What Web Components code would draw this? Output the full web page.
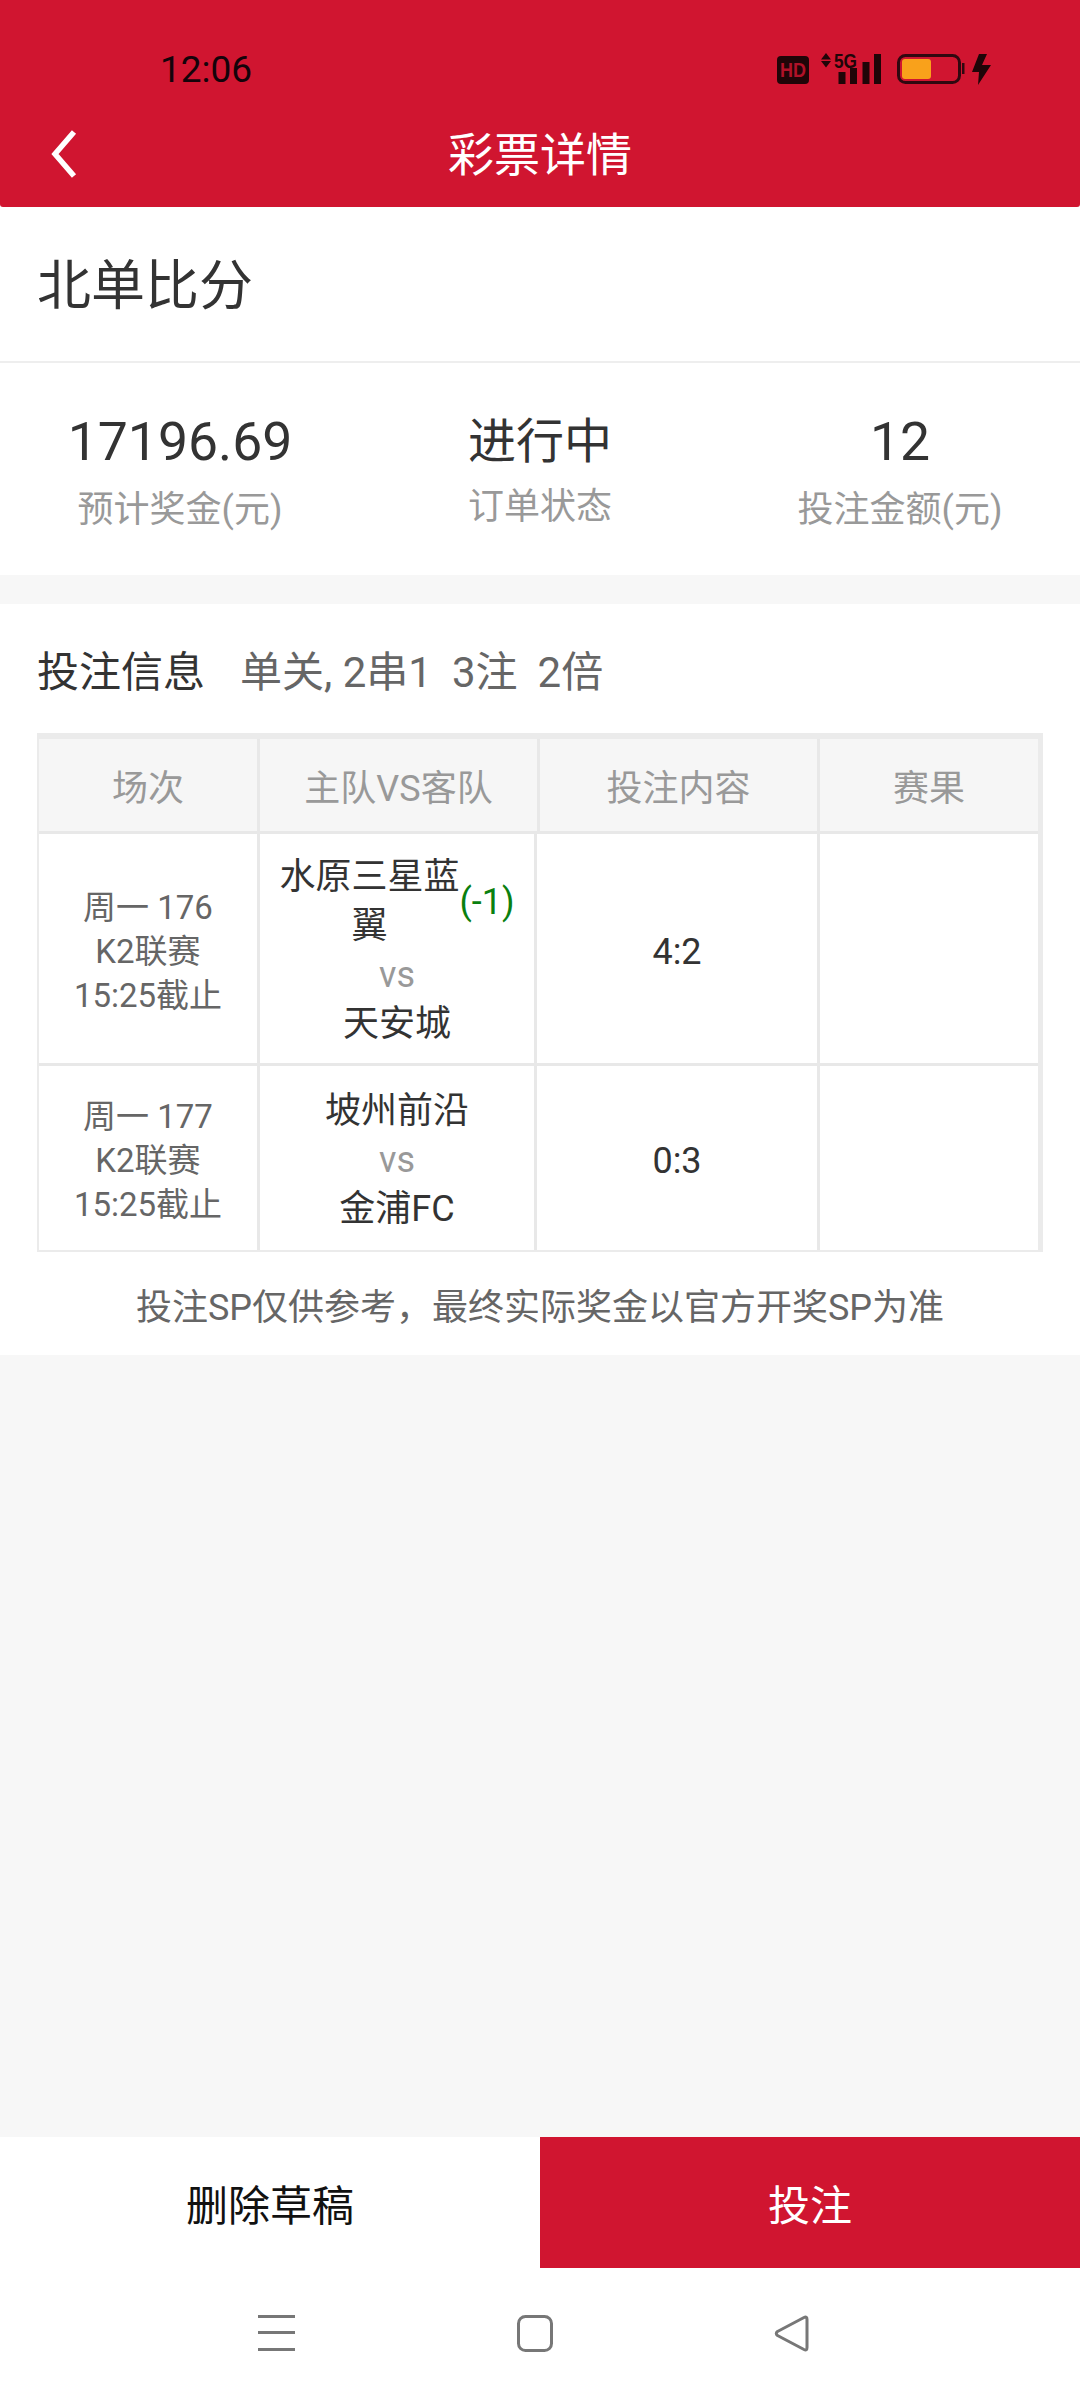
<!DOCTYPE html>
<html lang="zh"><head><meta charset="utf-8"><title>彩票详情</title>
<style>
html,body{margin:0;padding:0;background:#f7f7f7}
body{font-family:Roboto,"Noto Sans CJK SC",sans-serif;width:1080px;height:2400px;overflow:hidden}
lottery-page{height:2400px}
</style></head><body>
<lottery-page>
  <app-header title="彩票详情"></app-header>
  <title-row>北单比分</title-row>
  <stat-row>
    <stat-item value="17196.69" label="预计奖金(元)"></stat-item>
    <stat-item value="进行中" label="订单状态"></stat-item>
    <stat-item value="12" label="投注金额(元)"></stat-item>
  </stat-row>
  <bet-info>
    <bet-table>
      <bet-row pad="19px 0 14px" cell1="周一 176" cell2="K2联赛" cell3="15:25截止" score="4:2">
        <span slot="home">水原三星蓝翼</span><span slot="handicap">(-1)</span><span slot="away">天安城</span>
      </bet-row>
      <bet-row pad="21px 0 16px" cell1="周一 177" cell2="K2联赛" cell3="15:25截止" score="0:3">
        <span slot="home">坡州前沿</span><span slot="away">金浦FC</span>
      </bet-row>
    </bet-table>
  </bet-info>
  <action-bar></action-bar>
  <nav-bar></nav-bar>
</lottery-page>
<script>
function def(name, html, init){
  customElements.define(name, class extends HTMLElement{
    constructor(){super();this.attachShadow({mode:'open'});}
    connectedCallback(){
      let h=html;
      h=h.replace(/\{\{(\w+)\}\}/g,(m,k)=>this.getAttribute(k)||'');
      this.shadowRoot.innerHTML=h;
      if(init)init.call(this);
    }
  });
}
def('lottery-page',`<style>:host{display:flex;flex-direction:column;width:1080px;background:#f7f7f7}</style><slot></slot>`);

def('app-header',`<style>
:host{display:block;height:207px;background:#d01530;border-radius:0 0 3px 3px;flex:none}
.status{height:116px;display:flex;justify-content:space-between;padding-left:160px;padding-right:86px;box-sizing:border-box}
.time{font-size:37px;line-height:37px;margin-top:51px;color:#14030a;width:96px}
svg.icons{margin-top:20px;display:block}
.bar{height:91px;display:flex;align-items:center;justify-content:center;position:relative;box-sizing:border-box}
h1{margin:0;font-weight:400;font-size:46px;line-height:60px;color:#fff;margin-top:-14px}
svg.back{position:absolute;left:48px;top:12px}
</style>
<div class="status"><span class="time">12:06</span>
<svg class="icons" width="226" height="80" viewBox="768 20 226 80">
 <rect x="777" y="56" width="32" height="28" rx="4" fill="#200508"/>
 <text x="793" y="77" text-anchor="middle" font-family="Liberation Sans, sans-serif" font-weight="700" font-size="21" textLength="26" lengthAdjust="spacingAndGlyphs" fill="#b01228">HD</text>
 <path d="M826 53l5 6.500h-10zM826 67.500l-5-6.500h10z" fill="#200508"/>
 <text x="834" y="68" font-family="Liberation Sans, sans-serif" font-weight="700" font-size="20" textLength="23" lengthAdjust="spacingAndGlyphs" fill="#200508">5G</text>
 <g fill="#200508"><rect x="838.500" y="72" width="7" height="12"/><rect x="850" y="68" width="7" height="16"/><rect x="862.500" y="62" width="7" height="22"/><rect x="874" y="54" width="7" height="30"/></g>
 <rect x="898.500" y="55.500" width="61" height="27" rx="7" fill="none" stroke="#300810" stroke-width="3"/>
 <rect x="902" y="59" width="29" height="20" rx="3" fill="#f9a11b"/>
 <rect x="962" y="63" width="2.500" height="11" fill="#300810"/>
 <path d="M979 54L972 72H979L978 85L991 65H982L987 54Z" fill="#200508"/>
</svg></div>
<div class="bar">
 <svg class="back" width="32" height="52" viewBox="0 0 32 52"><path d="M26 4L7 26l19 22" fill="none" stroke="#fff" stroke-width="5.500"/></svg>
 <h1>{{title}}</h1></div>`);

def('title-row',`<style>
:host{display:flex;align-items:center;padding:0 37px 5px;box-sizing:border-box;height:156px;flex:none;background:#fff;border-bottom:2px solid #eee;font-size:54px;color:#333}
</style><slot></slot>`);

def('stat-row',`<style>
:host{display:grid;grid-template-columns:repeat(3,360px);height:212px;background:#fff;flex:none;margin-bottom:29px}
</style><slot></slot>`);

def('stat-item',`<style>
:host{display:flex;flex-direction:column;align-items:center;padding-top:46px;box-sizing:border-box}
.v{font-size:53.500px;line-height:66px;color:#333}
.v.cjk{font-size:48px}
.l{font-size:36px;line-height:48px;color:#999;margin-top:11px}
.v.cjk + .l{margin-top:8px}
</style><div class="v">{{value}}</div><div class="l">{{label}}</div>`,function(){
  const v=this.shadowRoot.querySelector('.v');
  if(/[^\d.]/.test(this.getAttribute('value')))v.classList.add('cjk');
});

def('bet-info',`<style>
:host{display:block;background:#fff;padding:0 37px;height:751px;box-sizing:border-box;flex:none}
.head{height:129px;display:flex;align-items:center;font-size:42px;color:#333}
.sub{display:flex;margin-left:35px;font-size:42px;color:#666;gap:20px}
.note{height:104px;display:flex;align-items:center;justify-content:center;font-size:36px;color:#666;white-space:nowrap}
</style>
<div class="head"><span>投注信息</span><div class="sub"><span>单关, 2串1</span><span>3注</span><span>2倍</span></div></div>
<slot></slot>
<div class="note">投注SP仅供参考，最终实际奖金以官方开奖SP为准</div>`);

def('bet-table',`<style>
:host{display:block;width:1006px;box-sizing:border-box;border:solid #ebebeb;border-width:6px 5px 2px 2px;background:#e8e8e8}
.hd{display:grid;grid-template-columns:218px 277px 277px 218px;gap:3px;height:92px;padding-bottom:3px;box-sizing:content-box}
.hd div{background:#f6f6f6;color:#999;font-size:36px;display:flex;align-items:center;justify-content:center}
</style>
<div class="hd"><div>场次</div><div>主队VS客队</div><div>投注内容</div><div>赛果</div></div><slot></slot>`);

def('bet-row',`<style>
:host{display:grid;grid-template-columns:218px 274px 280px 218px;gap:3px;border-bottom:3px solid #e8e8e8;box-sizing:border-box}
:host(:last-child){border-bottom:0}
.c{background:#fff;display:flex;align-items:center;justify-content:center;text-align:center}
.m{flex-direction:column;font-size:33px;line-height:44px;color:#666;padding-top:6px;box-sizing:border-box}
.t{flex-direction:column;font-size:36px;line-height:49px;color:#333;padding:{{pad}};box-sizing:border-box}
.home{display:flex;align-items:center;justify-content:center}
.name{max-width:180px}
.hc{color:#0a800f;margin-left:0}
.hc:empty{display:none}
.vs{color:#999}
.s{font-size:36px;color:#333;padding-top:6px;box-sizing:border-box}
</style>
<div class="c m"><div>{{cell1}}</div><div>{{cell2}}</div><div>{{cell3}}</div></div>
<div class="c t"><div class="home"><div class="name"><slot name="home"></slot></div><div class="hc"><slot name="handicap"></slot></div></div><div class="vs">vs</div><div><slot name="away"></slot></div></div>
<div class="c s">{{score}}</div>
<div class="c"></div>`);

def('action-bar',`<style>
:host{display:grid;grid-template-columns:540px 540px;height:131px;margin-top:auto;flex:none;background:#fff;font-size:42px}
div{display:flex;align-items:center;justify-content:center}
.a{color:#111}.b{background:#d01530;color:#fff}
</style><div class="a">删除草稿</div><div class="b">投注</div>`);

def('nav-bar',`<style>
:host{display:flex;height:132px;background:#fff;flex:none;align-items:center;padding-left:258px;box-sizing:border-box}
svg{display:block;margin-top:-2px}
.s{margin-left:222px}.t{margin-left:220px}
</style>
<svg width="37" height="36" viewBox="0 0 37 36"><g fill="#777"><rect y="0" width="37" height="3"/><rect y="16" width="37" height="3"/><rect y="33" width="37" height="3"/></g></svg>
<svg class="s" width="37" height="37" viewBox="0 0 37 37"><rect x="1.500" y="1.500" width="33" height="34" rx="7" fill="none" stroke="#777" stroke-width="3"/></svg>
<svg class="t" width="36" height="37" viewBox="0 0 36 37"><path d="M33 4.500Q33 1 30 2.500L3.500 16.500Q1 18.500 3.500 20.500L30 34.500Q33 36 33 32.500Z" fill="none" stroke="#777" stroke-width="3" stroke-linejoin="round"/></svg>`);
</script>
</body></html>
